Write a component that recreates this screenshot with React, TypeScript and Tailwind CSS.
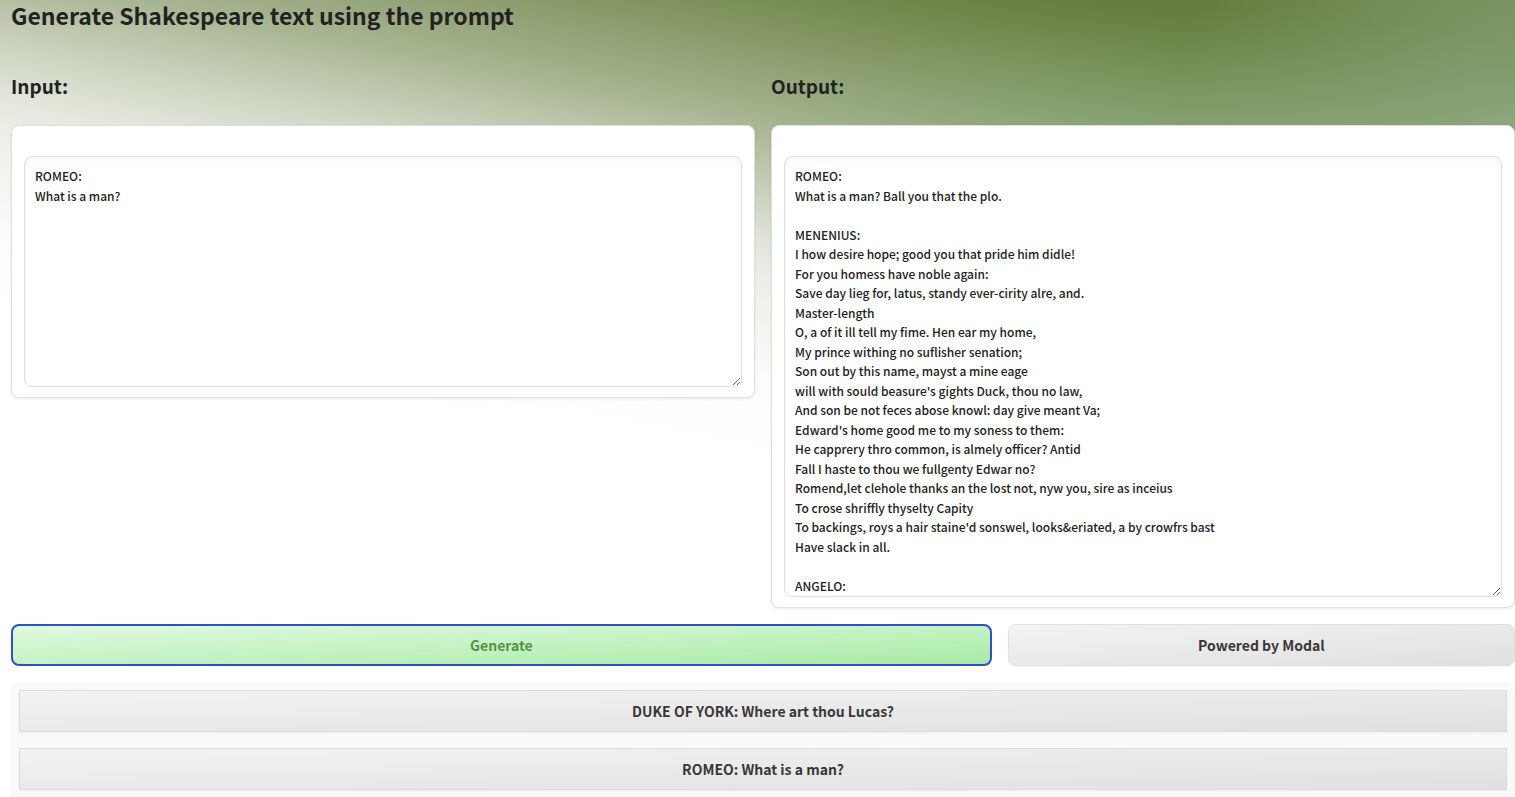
import { useState } from "react";

const OUTPUT_TEXT = `ROMEO:
What is a man? Ball you that the plo.

MENENIUS:
I how desire hope; good you that pride him didle!
For you homess have noble again:
Save day lieg for, latus, standy ever-cirity alre, and.
Master-length
O, a of it ill tell my fime. Hen ear my home,
My prince withing no suflisher senation;
Son out by this name, mayst a mine eage
will with sould beasure's gights Duck, thou no law,
And son be not feces abose knowl: day give meant Va;
Edward's home good me to my soness to them:
He capprery thro common, is almely officer? Antid
Fall I haste to thou we fullgenty Edwar no?
Romend,let clehole thanks an the lost not, nyw you, sire as inceius
To crose shriffly thyselty Capity
To backings, roys a hair staine'd sonswel, looks&eriated, a by crowfrs bast
Have slack in all.

ANGELO:`;

const EXAMPLES = [
  { label: "DUKE OF YORK: Where art thou Lucas?", prompt: "DUKE OF YORK:\nWhere art thou Lucas?" },
  { label: "ROMEO: What is a man?", prompt: "ROMEO:\nWhat is a man?" },
];

type PanelProps = {
  id: string;
  title: string;
  value: string;
  heightClass: string;
  onChange: (value: string) => void;
};

function TextPanel({ id, title, value, heightClass, onChange }: PanelProps) {
  return (
    <section>
      <h2 className="text-[19px] leading-7 font-bold text-[#222]">
        <label htmlFor={id}>{title}</label>
      </h2>
      <div className="mt-[25px] rounded-lg border border-[#e0e0e0] bg-white px-3 pt-[30px] pb-[10px] shadow-[0_1px_3px_rgba(0,0,0,0.08)]">
        <textarea
          id={id}
          value={value}
          onChange={(e) => onChange(e.target.value)}
          spellCheck={false}
          className={`block w-full resize overflow-hidden rounded-lg border border-[#e0e0e0] bg-white px-[10px] py-[9px] text-[12px] leading-relaxed font-medium text-[#222] shadow-[inset_0_2px_4px_rgba(0,0,0,0.05)] outline-none ${heightClass}`}
        />
      </div>
    </section>
  );
}

export default function App() {
  const [input, setInput] = useState(EXAMPLES[1].prompt);
  const [output, setOutput] = useState(OUTPUT_TEXT);

  return (
    <div className="min-h-screen bg-[radial-gradient(ellipse_340px_400px_at_100%_130px,rgba(160,190,160,0.55),rgba(160,190,160,0)),radial-gradient(ellipse_480px_150px_at_78%_160px,rgba(120,175,120,0.4),rgba(120,175,120,0)),linear-gradient(191deg,#637a3a_0px,#637a3a_40px,#677e40_85px,#6f8549_115px,#7b8f58_150px,#98a77d_224px,#a9b693_265px,#bac4a8_297px,#d0d7c4_342px,#e1e6da_382px,#ebeee5_414px,#fcfcfb_520px,#ffffff_600px)] bg-[length:100%_480px] bg-no-repeat pl-[11px] font-['Noto_Sans_CJK_JP','Noto_Sans',sans-serif]">
      <h1 className="text-[23px] leading-[30px] font-bold text-[#222]">Generate Shakespeare text using the prompt</h1>

      <div className="mt-[42px] grid grid-cols-2 items-start gap-4">
        <TextPanel id="input" title="Input:" value={input} heightClass="h-[231px]" onChange={setInput} />
        <TextPanel id="output" title="Output:" value={output} heightClass="h-[441px]" onChange={setOutput} />
      </div>

      <div className="mt-4 grid grid-cols-[29fr_15fr] gap-4">
        <button
          type="button"
          className="h-[42px] rounded-lg border-2 border-[#3050c8] bg-linear-to-br from-[#e0f9e0] to-[#a8eba5] text-[14px] font-bold text-[#559448]"
        >
          Generate
        </button>
        <button
          type="button"
          className="h-[42px] rounded-lg border border-[#e0e0e0] bg-linear-to-br from-[#f3f3f3] to-[#e0e0e0] text-[14px] font-bold text-[#383838] shadow-[0_1px_2px_rgba(0,0,0,0.05)]"
        >
          Powered by Modal
        </button>
      </div>

      <div className="mt-4 flex flex-col gap-4 rounded-t-lg bg-[#f9f9f9] p-2">
        {EXAMPLES.map((example) => (
          <button
            key={example.label}
            type="button"
            onClick={() => setInput(example.prompt)}
            className="h-[42px] border border-[#dddddd] bg-linear-to-br from-[#f3f3f3] to-[#e0e0e0] text-[14px] font-bold text-[#383838] shadow-[0_1px_2px_rgba(0,0,0,0.05)]"
          >
            {example.label}
          </button>
        ))}
      </div>
    </div>
  );
}
